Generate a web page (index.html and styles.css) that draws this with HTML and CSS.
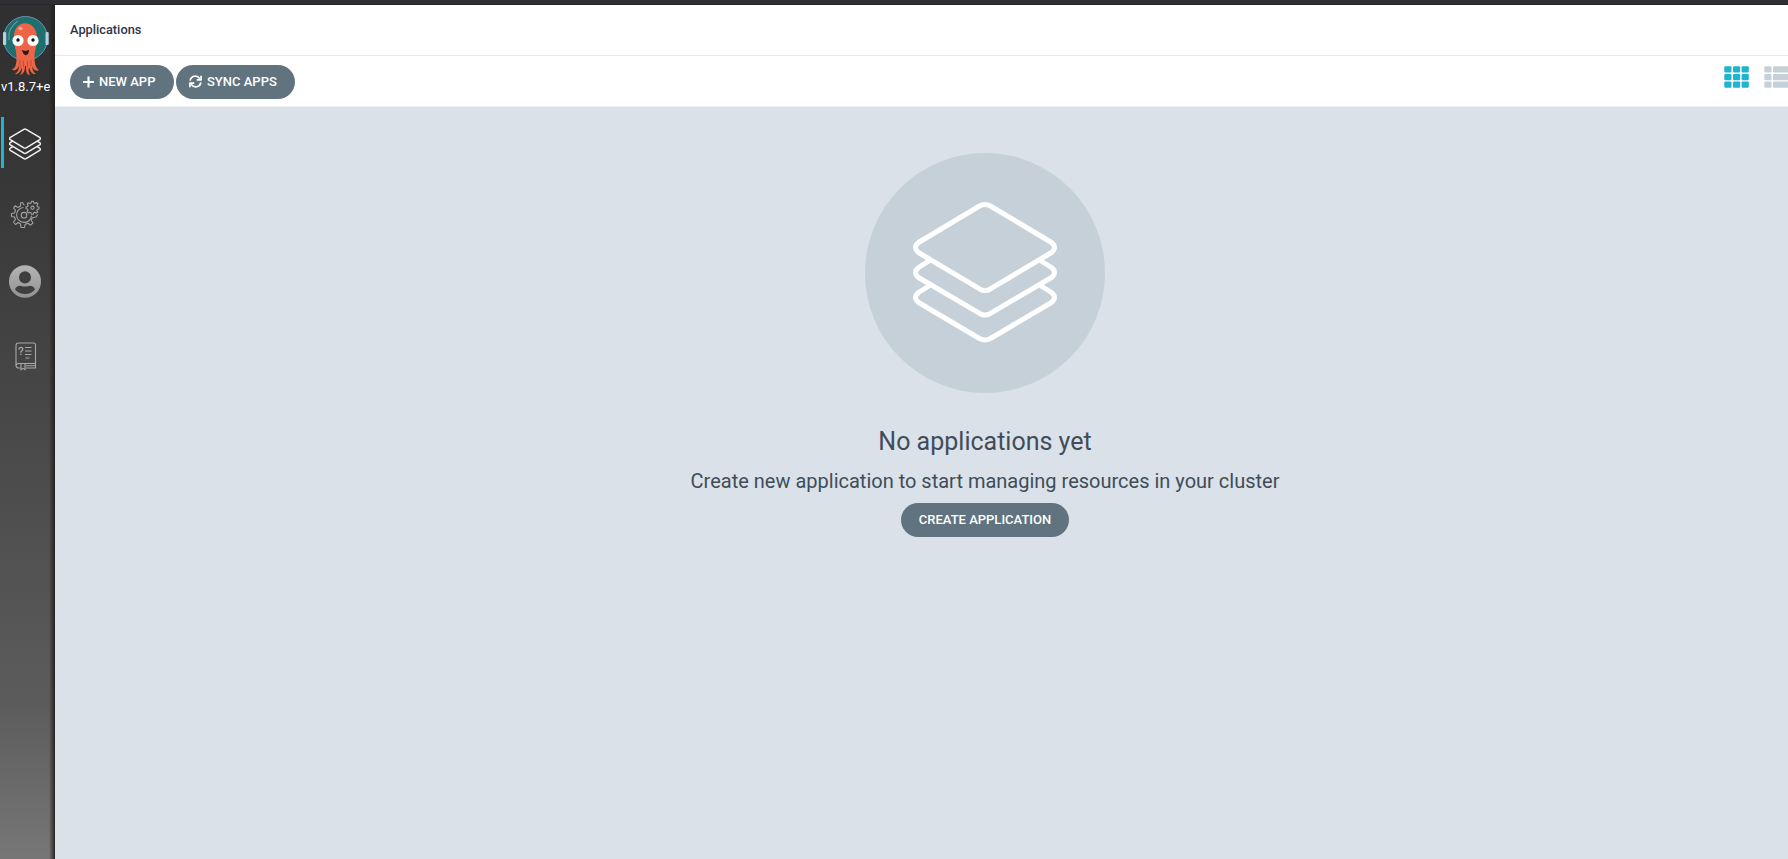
FILE: index.html
```html
<!DOCTYPE html>
<html lang="en">
<head>
<meta charset="utf-8">
<title>Applications</title>
<link rel="stylesheet" href="styles.css">
</head>
<body>
<div class="topbar"></div>
<div class="layout">
  <nav class="sidebar">
    <div class="logo">
      <svg width="50" height="71" viewBox="0 0 50 71">
        <circle cx="25.500" cy="33.500" r="22" fill="#1f6f70" stroke="#6a92ad" stroke-width="1"/>
        <path d="M9 35C8 27 12 20 18 16" fill="none" stroke="#5e9c9a" stroke-width="1.200"/>
        <rect x="3" y="27" width="3.200" height="13" rx="1" fill="#b3cfe2"/>
        <rect x="45.500" y="27" width="3.200" height="13" rx="1" fill="#b3cfe2"/>
        <path d="M14 34C12 13 38 13 37 34C37 41 34.500 45 34.500 52C34.500 60 36 63 39 65C36 67 33 64 32 61C32 65 34 68 36 69C32 70 30 66 29 62C28 66 29 68 30 70C26 70 26 65 26 61H25C25 65 24 69 20 70C22 67 22 65 22 62C21 66 18 70 15 69C18 67 19 64 19 61C17 65 14 67 12 64C15 64 16.500 60 16.500 53C16.500 45 14 41 14 34Z" fill="#ed6545"/>
        <path d="M20 55V62M23.500 56V62M27.500 56V62M31 55V61" stroke="#bf493d" stroke-width=".9"/>
        <ellipse cx="20.500" cy="23.500" rx="2.300" ry="1.800" fill="#f6a18b"/>
        <circle cx="18" cy="35.500" r="5.600" fill="#fff"/>
        <circle cx="33" cy="35.500" r="5.600" fill="#fff"/>
        <circle cx="18" cy="35" r="1.700" fill="#111"/>
        <circle cx="33" cy="35" r="1.700" fill="#111"/>
        <path d="M22 44.800C24 46.300 27 46.300 29 44.800C29 52 23 52 22 44.800Z" fill="#35171b"/>
      </svg>
      <div class="version">v1.8.7+e</div>
    </div>
    <a class="nav-item nav-item--active">
      <svg width="32" height="32" viewBox="0 0 144 142" fill="none" stroke="#f4f4f4" stroke-width="6.500" stroke-linejoin="round">
        <path d="M67 5Q72 2 77 5L138 41Q145 46 138 51L77 88Q72 91 67 88L6 51Q-1 46 6 41Z"/>
        <path d="M17 58L6 65Q-1 70 6 75L67 112Q72 115 77 112L138 75Q145 70 138 65L127 58"/>
        <path d="M17 83L6 90Q-1 95 6 100L67 137Q72 140 77 137L138 100Q145 95 138 90L127 83"/>
      </svg>
    </a>
    <a class="nav-item nav-item--gear">
      <svg width="30" height="30" viewBox="0 0 30 30" fill="none" stroke="#a2a2a2" stroke-width="1.100" stroke-linejoin="round" stroke-linecap="round">
        <path d="M14 5L12.500 2.500L10.500 3L10.500 6L8 7.500L5.200 5.800L3.500 8L5.500 10.300L4.500 13L1.500 13.500V16.500L4.500 17L5.500 19.500L3.500 22L5.500 24.500L8.200 22.500L10.500 24L11 27.500H14.500L15.200 24.200L18 23.200L20.500 25.200L23 23L21.200 20.200L22.300 17.800L26 17L27.500 15"/>
        <path d="M13 7.500A7.500 7.500 0 1 0 21.500 16"/>
        <circle cx="14" cy="15.200" r="2.800"/>
        <path d="M21.200 3L21.500 1.200H23.500L23.800 3L25 3.500L26.500 2.500L28 4L27 5.500L27.500 6.800L29 7V9L27.300 9.300L26.800 10.500L27.700 12L26.300 13.200L24.800 12.300L23.600 12.800L23.300 14.300H21.400L21 12.700L19.700 12.200L18.300 13L17 11.600L18 10.200L17.500 9L16 8.700V6.900L17.600 6.500L18.200 5.300L17.200 4L18.600 2.700L20 3.600Z"/>
        <circle cx="22.500" cy="7.700" r="1.600"/>
      </svg>
    </a>
    <a class="nav-item nav-item--user">
      <svg width="32" height="33" viewBox="0 0 32 33">
        <defs><linearGradient id="user" x2="0" y2="1"><stop stop-color="#b4b4b4"/><stop offset="1" stop-color="#929292"/></linearGradient></defs>
        <path fill="url(#user)" fill-rule="evenodd" d="M16 .3A16 16.200 0 1 0 16 32.700A16 16.200 0 1 0 16 .3ZM16 6.200A6 6.200 0 1 1 16 18.600A6 6.200 0 1 1 16 6.200ZM10.500 20.700C12.500 20.600 13.500 21.600 16 21.600S19.500 20.600 21.500 20.700C24 21 25.500 22.500 26 24.500C21 30.500 11 30.500 6 24.500C6.500 22.500 8 21 10.500 20.700Z"/>
      </svg>
    </a>
    <a class="nav-item nav-item--docs">
      <svg width="22" height="29" viewBox="0 0 22 29" fill="none" stroke="#a8a8a8" stroke-width="1.100">
        <path d="M5.500 26H3.500Q1 26 1 23.500V3.500Q1 1 3.500 1H18.500Q20.500 1 20.500 3V21.500H3.500Q1 21.500 1 23.700M20.500 21.500V26H10.500M10.500 23.700H20.500"/>
        <path d="M6 21.500V27.700L8 26.300L10 27.700V21.500"/>
        <path d="M4 7.500Q4 5.300 6 5.300T7.700 7.300C7.700 9 5.800 8.600 5.800 10.700M5.800 11.700V13" stroke-width="1.300"/>
        <path d="M10 5.500H16.500M10 9H16.500M10 12.500H16.500M10.500 16H14.500"/>
      </svg>
    </a>
  </nav>
  <main class="main">
    <header class="title-row">Applications</header>
    <div class="toolbar">
      <button class="btn btn--new">
        <svg width="11" height="12" viewBox="0 0 11 12"><path d="M5.500 .5V11.500M0 6H11" stroke="#fff" stroke-width="2.100"/></svg>
        <span>NEW APP</span>
      </button>
      <button class="btn btn--sync">
        <svg width="13" height="13" viewBox="0 0 512 512" fill="none" stroke="#fff" stroke-width="68"><path d="M45 220C75 25 310-15 430 145M467 292C437 487 202 527 82 367"/><path d="M475 25V193H305M37 487V319H207" stroke-linejoin="round"/></svg>
        <span>SYNC APPS</span>
      </button>
      <div class="views">
        <svg width="25" height="22" viewBox="0 0 25 22" fill="#1fb5ce"><g id="rows"><rect x=".3" y=".2" width="7.200" height="6.300" rx="1"/><rect x="9" y=".2" width="7.200" height="6.300" rx="1"/><rect x="17.600" y=".2" width="7.200" height="6.300" rx="1"/></g><use href="#rows" y="7.700"/><use href="#rows" y="15.300"/></svg>
        <svg width="25" height="22" viewBox="0 0 25 22" fill="#c6d0d9"><g id="list"><rect x=".3" y=".2" width="7.200" height="6.300" rx="1"/><rect x="9" y=".2" width="16" height="6.300" rx="1"/></g><use href="#list" y="7.700"/><use href="#list" y="15.300"/></svg>
      </div>
    </div>
    <section class="empty">
      <div class="empty-icon">
        <svg width="144" height="142" viewBox="0 0 144 142" fill="none" stroke="#fff" stroke-width="5" stroke-linejoin="round">
          <path d="M66.500 4Q72 1.200 77.500 4L138.500 40.500Q144.500 45.500 138.500 50.500L77 87.200Q72 90 67 87.200L5.500 50.500Q-.5 45.500 5.500 40.500Z"/>
          <path d="M17.500 58L5.500 65.500Q-.5 70.500 5.500 75.500L67 111.700Q72 114.200 77 111.700L138.500 75.500Q144.500 70.500 138.500 65.500L126.500 58"/>
          <path d="M17.500 83L5.500 90.500Q-.5 95.500 5.500 100.500L66.500 136.500Q72 139.500 77.500 136.500L138.500 100.500Q144.500 95.500 138.500 90.500L126.500 83"/>
        </svg>
      </div>
      <h4 class="empty-title">No applications yet</h4>
      <h5 class="empty-text">Create new application to start managing resources in your cluster</h5>
      <button class="btn btn--create">CREATE APPLICATION</button>
    </section>
  </main>
</div>
</body>
</html>
```
FILE: styles.css
```css
* { box-sizing: border-box; }
body {
  margin: 0;
  height: 859px;
  overflow: hidden;
  font-family: Roboto, "Liberation Sans", sans-serif;
  background: #dae1e9;
}
.topbar { height: 5px; background: linear-gradient(#302f35 75%, #232227); }
.layout { display: flex; height: 854px; overflow: hidden; }
.sidebar {
  width: 55px;
  flex: none;
  background:
    linear-gradient(90deg, transparent 49px, rgba(32, 28, 26, .75) 54px, #24201f 55px),
    linear-gradient(#303030 0, #333 110px, #454545 370px, #5c5c5c 700px, #777 854px);
}
.logo { height: 112px; }
.logo svg { display: block; margin-bottom: 2px; }
.version {
  width: 49px;
  margin-left: 1px;
  overflow: hidden;
  color: #fff;
  font-size: 13px;
  line-height: 18px;
  white-space: nowrap;
}
.nav-item { display: flex; height: 51px; padding: 11px 0 0 8px; border-left: 1px solid transparent; }
.nav-item--active { padding-left: 5px; margin-left: 1px; border-left: 3px solid #1fb5ce; }
.nav-item--gear { margin-top: 22px; padding: 10px 0 0 9px; }
.nav-item--user { margin-top: 16px; padding-top: 8px; }
.nav-item--docs { margin-top: 16px; padding: 18px 0 0 14px; }
.main { flex: none; width: 1860px; background: #dae1e9; }
.title-row {
  height: 51px;
  padding: 0 15px;
  border-bottom: 1px solid #e9ebed;
  background: #fff;
  color: #2f3547;
  font-size: 12.800px;
  font-weight: 500;
  line-height: 50px;
}
.toolbar {
  display: flex;
  gap: 2px;
  height: 51px;
  padding: 9px 15px;
  background: #fff;
  border-bottom: 1px solid #edf0f3;
}
.btn {
  display: flex;
  align-items: center;
  height: 34px;
  border: 0;
  border-radius: 17px;
  background: #61737f;
  color: #fff;
  font: 500 13px Roboto, "Liberation Sans", sans-serif;
  white-space: nowrap;
}
.btn span { padding-bottom: 2px; }
.btn svg { margin-bottom: 1px; }
.btn--new { width: 104px; padding: 0 0 0 13px; gap: 5px; }
.btn--sync { width: 119px; padding: 0 0 0 13px; gap: 5px; }
.views { display: flex; gap: 15px; margin: 1px 0 0 1427px; }
.empty { display: flex; flex-direction: column; align-items: center; padding-top: 46px; color: #3f4d59; }
.empty-icon { display: flex; width: 240px; height: 240px; padding: 49px 48px; border-radius: 50%; background: #c6d0d9; }
.empty-title { margin: 33px 0 0; font-size: 25px; font-weight: 400; line-height: 32px; }
.empty-text { margin: 10px 0 0; font-size: 20px; font-weight: 400; line-height: 26px; }
.btn--create { width: 168px; justify-content: center; margin-top: 9px; padding: 0 0 1px; }
```
